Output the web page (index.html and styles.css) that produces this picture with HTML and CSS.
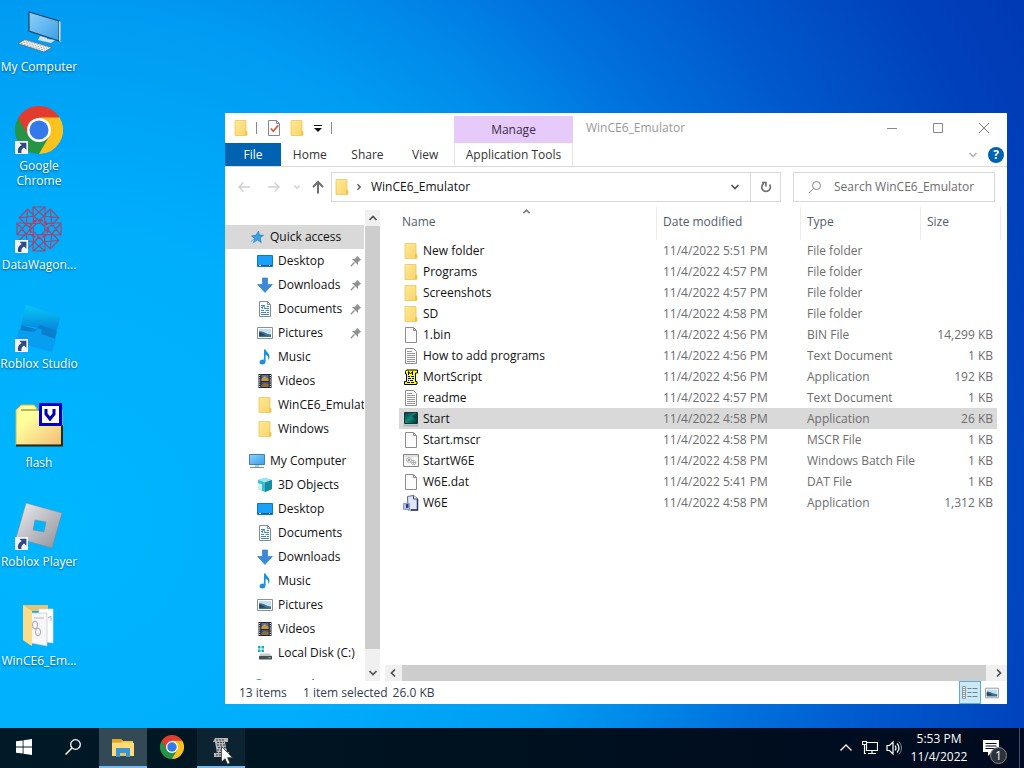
FILE: index.html
```html
<!DOCTYPE html>
<html lang="en">
<head>
<meta charset="utf-8">
<title>WinCE6_Emulator</title>
<link rel="stylesheet" href="styles.css">
</head>
<body>
<svg class="sprite" aria-hidden="true">
  <defs>
    <linearGradient id="g-folder" x1="0" y1="0" x2="1" y2="1"><stop offset="0" stop-color="#ffe996"/><stop offset="1" stop-color="#f8d468"/></linearGradient>
    <linearGradient id="g-screen" x1="0" y1="0" x2="1" y2="1"><stop offset="0" stop-color="#8fd0f8"/><stop offset="1" stop-color="#3a9fe8"/></linearGradient>
    <linearGradient id="g-studio" x1="0" y1="0" x2="0" y2="1"><stop offset="0" stop-color="#08c8f6"/><stop offset="1" stop-color="#0684dc"/></linearGradient>
    <linearGradient id="g-player" x1="0" y1="0" x2="1" y2="1"><stop offset="0" stop-color="#eceef0"/><stop offset="1" stop-color="#8d9099"/></linearGradient>
    <linearGradient id="g-flash" x1="0" y1="0" x2="1" y2="1"><stop offset=".3" stop-color="#ffff9c"/><stop offset="1" stop-color="#f2bc78"/></linearGradient>
    <linearGradient id="g-start" x1="0" y1="0" x2="1" y2="1"><stop offset="0" stop-color="#063a44"/><stop offset=".5" stop-color="#0b8a78"/><stop offset="1" stop-color="#042830"/></linearGradient>
  </defs>
  <symbol id="folder" viewBox="0 0 16 16"><path d="M2 .5h11v10.500l1 .5v3.500l-1 .5H2z" fill="url(#g-folder)" stroke="#ecc75e" stroke-width=".8"/><path d="M12 11v4.500h1.200l.8-.6v-3.500l-1-.6z" fill="#f3c44a"/></symbol>
  <symbol id="page" viewBox="0 0 16 16"><path d="M2.500.5h8l3 3v12h-11z" fill="#fcfcfc" stroke="#8c8c8c"/><path d="M10.500.5v3h3" fill="none" stroke="#8c8c8c"/></symbol>
  <symbol id="text" viewBox="0 0 16 16"><path d="M2.500.5h8l3 3v12h-11z" fill="#fcfcfc" stroke="#8c8c8c"/><path d="M4 3.500h5M4 5.500h8M4 7.500h8M4 9.500h8M4 11.500h8M4 13.500h8" stroke="#999"/></symbol>
  <symbol id="desktop" viewBox="0 0 16 16"><path d="M.5 2.500h15v11H.5z" fill="#18a0fb" stroke="#0b78c9"/><path d="M1 12.500h14" stroke="#0c5a98"/><path d="M2 12.500h2M12 12.500h1" stroke="#fff"/></symbol>
  <symbol id="down" viewBox="0 0 16 16"><path d="M5.500 1h5v6.500h4.800L8 15.500.7 7.500h4.800z" fill="#3b8ad8" stroke="#2a74c0" stroke-width=".6"/></symbol>
  <symbol id="docs" viewBox="0 0 16 16"><path d="M2.500.5h8l3 3v12h-11z" fill="#fff" stroke="#7c8b96"/><path d="M10.500.5v3h3" fill="none" stroke="#7c8b96"/><path d="M4 4.500h4M9.500 5.500H12M4 6.500h2M7.500 7.500H12M4 9.500h3M8.500 9.500H12M4 11.500h5M10 11.500h2M4 13.500h8" stroke="#3f89b8"/><path d="M5 8l1.500-4L8 8" stroke="#3f89b8" fill="none"/></symbol>
  <symbol id="pics" viewBox="0 0 16 16"><path d="M.5 2.500h15v11H.5z" fill="#fff" stroke="#8a9196"/><path d="M2 4h12v8H2z" fill="#bfe0f6"/><path d="M2 6.500c4-1 7 3 12 3V12H2z" fill="#3f7188"/><path d="M2 7.500c3 0 4 2 7 3l-7 .5z" fill="#27465a"/></symbol>
  <symbol id="music" viewBox="0 0 16 16"><path d="M7 .5h1.600c.4 2.600 4.400 3.600 3.900 8-.2 1.200-.8 2-1.400 2.500.7-3-.4-4.400-2.500-5.200v6.700c0 1.900-1.500 3-3.200 3S2.500 14.500 2.500 13.200c0-1.600 2.200-3 4.500-2.500z" fill="#1593dc"/></symbol>
  <symbol id="video" viewBox="0 0 16 16"><path d="M1.500 1h13v14h-13z" fill="#26272b"/><path d="M2.700 2v12.500M13.300 2v12.500" stroke="#e6e6e6" stroke-width="1.200" stroke-dasharray="1 1.200"/><path d="M4.500 2h7v6h-7z" fill="#5b6bb0"/><path d="M4.500 6l3-3 4 3v2h-7z" fill="#c79a35"/><path d="M4.500 9h7v5h-7z" fill="#455292"/><path d="M4.500 12l3-2 4 1v3h-7z" fill="#8d6d35"/></symbol>
  <symbol id="star" viewBox="0 0 16 16"><path d="M9.500 2l.9 4 4.100.3-3.300 2.600 1 4.600-3.700-2.500-4 2.500 1.200-4-3.200-2.600 4.400-.6z" fill="#3aa0e4" stroke="#1e7fc4" stroke-width=".7"/><path d="M2 12.500l3-2.500M3.500 14.500L6 11.500" stroke="#5ab4ee"/></symbol>
  <symbol id="pc" viewBox="0 0 16 16"><path d="M.5 1.500h15v10H.5z" fill="url(#g-screen)" stroke="#3985b8"/><path d="M6 12h4v2H6z" fill="#b8c8d2"/><path d="M1 14.500h14" stroke="#6595b4"/></symbol>
  <symbol id="cube" viewBox="0 0 16 16"><path d="M8 1l7 2v9l-7 3-7-3V3z" fill="#36bccb"/><path d="M8 1l7 2-7 2.500L1 3z" fill="#9ae8ee"/><path d="M8 5.500L15 3v9l-7 3z" fill="#138ca2"/><path d="M1 6l4 1.300V13.500L1 12z" fill="#c7f3f5"/></symbol>
  <symbol id="disk" viewBox="0 0 16 16"><path d="M1 1h2.500v2.500H1zM4.500 1H7v2.500H4.500zM1 4.500h2.500V7H1zM4.500 4.500H7V7H4.500z" fill="#1aaeb8"/><path d="M3.500 8.500h9l2.500 2.500H2z" fill="#c5c9cc"/><path d="M2 11h13v3.500H2z" fill="#4b5054"/><path d="M11.500 12.700h2" stroke="#67e07a"/></symbol>
  <symbol id="net" viewBox="0 0 16 16"><circle cx="10" cy="7" r="5" fill="#4b9a94"/><path d="M2 7h7v6H2z" fill="#4ba8e4"/></symbol>
  <symbol id="pin" viewBox="0 0 12 12"><path d="M7 .8L11.200 5l-1.300.4-1.700 1.700-.3 2.900L2 4.100l2.900-.3 1.700-1.700z" fill="#8d9296"/><path d="M4.500 7.500L.8 11.200" stroke="#8d9296" stroke-width="1.400"/></symbol>
  <symbol id="mort" viewBox="0 0 16 16"><path d="M2.500 2.500l1-1.500h11v3h-2v8.500H14v2.500l-1 .5H1.500v-3h2V5h-1z" fill="#ff0" stroke="#000"/><path d="M5.500 6V2.500L7.500 5l2-2.500V6" fill="none" stroke="#000"/><path d="M5 7.500h2m1 0h3M5 9.500h3m1 0h2M5 11.500h1m1 0h3M4 13.500h3m1 0h3" stroke="#000"/></symbol>
  <symbol id="startexe" viewBox="0 0 16 16"><path d="M1.500 1.500h13v11h-13z" fill="url(#g-start)" stroke="#203236"/><path d="M9 5l5-3v9z" fill="#04454b"/><path d="M.5 14.500h15" stroke="#aeb4b4" stroke-width="2"/></symbol>
  <symbol id="batch" viewBox="0 0 16 16"><path d="M.5 1.500h15v12H.5z" fill="#f8f8f8" stroke="#858585"/><path d="M1 3h14" stroke="#c8c8c8"/><g fill="none" stroke="#858585"><circle cx="6" cy="7" r="2.400" stroke-dasharray="1 .5"/><circle cx="6" cy="7" r=".8"/><circle cx="10.500" cy="9.500" r="2.200" stroke-dasharray="1 .5"/><circle cx="10.500" cy="9.500" r=".7"/></g></symbol>
  <symbol id="w6e" viewBox="0 0 16 16"><path d="M4.500 1.500l6-1 4 3v11.500H5z" fill="#dfe6fa" stroke="#5f6685"/><path d="M10.500.5v3.500h4" fill="#fff" stroke="#394474"/><path d="M14.500 4v11H8" fill="none" stroke="#28346e" stroke-width="1.500"/><path d="M.5 8.500h6v6h-6z" fill="#b4c1e8" stroke="#8c9ac4"/><path d="M3 9h2.500v4H3z" fill="#243a8e"/></symbol>
  <symbol id="props" viewBox="0 0 16 16"><path d="M2.500.5h8l3 3v12h-11z" fill="#fff" stroke="#8088a0"/><path d="M10.500.5v3h3" fill="none" stroke="#8088a0"/><path d="M4.800 8.500l2.500 2.800 5-6" fill="none" stroke="#dc5132" stroke-width="1.700"/></symbol>
  <symbol id="details" viewBox="0 0 16 16"><path d="M.5 1.500h3v12h-3zM.5 5.500h3M.5 9.500h3" fill="#fff" stroke="#8899a5"/><path d="M1.500 3.500h1M1.500 7.500h1M1.500 11.500h1" stroke="#333"/><path d="M5.500 3.500h4m1 0h5M5.500 7.500h4m1 0h5M5.500 11.500h4m1 0h5" stroke="#6f828e"/></symbol>
  <symbol id="up" viewBox="0 0 10 10"><path d="M1.500 7L5 3.500 8.500 7" fill="none" stroke="currentColor" stroke-width="1.700"/></symbol>
  <symbol id="chev" viewBox="0 0 10 10"><path d="M1.500 3L5 6.500 8.500 3" fill="none" stroke="currentColor" stroke-width="1.700"/></symbol>
  <symbol id="left" viewBox="0 0 10 10"><path d="M7 1.500L3.500 5 7 8.500" fill="none" stroke="currentColor" stroke-width="1.700"/></symbol>
  <symbol id="right" viewBox="0 0 10 10"><path d="M3 1.500L6.500 5 3 8.500" fill="none" stroke="currentColor" stroke-width="1.700"/></symbol>
  <symbol id="chrome" viewBox="0 0 48 48"><path d="M24 24L3.200 12A24 24 0 0 1 44.800 12z" fill="#e33b2e"/><path d="M24 24L44.800 12A24 24 0 0 1 24 48z" fill="#fcc31e"/><path d="M24 12h20.800" stroke="#fcc31e" stroke-width="1"/><path d="M3.200 12A24 24 0 0 0 24 48l10.400-18L24 24z" fill="#259447"/><path d="M24 12h20.800l-10.400 18z" fill="#fcc31e"/><path d="M3.200 12l10.400 18L24 12z" fill="#e33b2e"/><circle cx="24" cy="24" r="12" fill="#fff"/><circle cx="24" cy="24" r="9.500" fill="#3479ea"/></symbol>
  <symbol id="link" viewBox="0 0 12 12"><path d="M0 0h12v12H0z" fill="#f4f5f8"/><path d="M4 1.500h6.500V8L8.300 5.900C6 7.500 5.600 9 6 11H3C2 8 3.200 5.500 6.200 3.800z" fill="#2e4a86"/></symbol>
  <symbol id="mycomputer" viewBox="0 0 48 48"><path d="M14 5l30 9v20l-30-10z" fill="url(#g-screen)" stroke="#24445e" stroke-width="1.200"/><path d="M44 14l1.500 1v20l-1.500-1z" fill="#ddd"/><path d="M25 29l7 2v1l8 1-4 3-13-3 1-2z" fill="#dadfe3"/><path d="M3 36.500l7-4 27 8-8 4.500z" fill="#f1f1f1" stroke="#596a74" stroke-width=".8"/><path d="M6 36.500l24 7M8 35l24 7M10 33.500l24 7" stroke="#a8b2b8" stroke-dasharray="2 1"/></symbol>
  <symbol id="wagon" viewBox="0 0 48 48"><g fill="none" stroke="#9c4878" stroke-width="1.200"><g id="cell"><path d="M18 2h12v8l-6 6-6-6zM18 2l12 10M30 2L18 12M24 16l5 5"/></g><use href="#cell" transform="rotate(45 24 24)"/><use href="#cell" transform="rotate(90 24 24)"/><use href="#cell" transform="rotate(135 24 24)"/><use href="#cell" transform="rotate(180 24 24)"/><use href="#cell" transform="rotate(225 24 24)"/><use href="#cell" transform="rotate(270 24 24)"/><use href="#cell" transform="rotate(315 24 24)"/><circle cx="24" cy="24" r="9" stroke="#c03a60" stroke-dasharray="4 2" stroke-width="2"/></g></symbol>
  <symbol id="studio" viewBox="0 0 48 48"><path d="M11 1l35 11-4.500 15L6 21z" fill="url(#g-studio)"/><path d="M6 21l15 4 4-4 17 6-2 8-35-8z" fill="#087fcd"/><path d="M4 26l15 2 4-4 4 2-1 4 15 5-4 13L0 38z" fill="#079df0"/></symbol>
  <symbol id="player" viewBox="0 0 48 48"><path d="M11 1l36 10-10 35L1 36zM20 18l-2 10 11 2 2-10z" fill="url(#g-player)" fill-rule="evenodd" stroke="#7d858e" stroke-width=".5"/></symbol>
  <symbol id="flashfolder" viewBox="0 0 48 48"><path d="M1 7l5-5h13l4 5h24v35H1z" fill="url(#g-flash)" stroke="#d5b552"/><path d="M1 42.500h46V22" fill="none" stroke="#272916" stroke-width="2"/><path d="M6 7h18" stroke="#6f6a30"/><path d="M25.500 1.500h20v20h-20z" fill="#fff" stroke="#0000c8" stroke-width="3"/><path d="M31 6v5l4 5 4-5V6" fill="none" stroke="#0000b4" stroke-width="3"/></symbol>
  <symbol id="openfolder" viewBox="0 0 48 48"><path d="M8 4h25v6H15v34L8 39z" fill="#e5c36f"/><path d="M24 8h14v34l-14-2z" fill="#fff" stroke="#d9d9d9" stroke-width=".7"/><path d="M16 12h16v33l-16-3z" fill="#f7f7f9" stroke="#c5c5c8" stroke-width=".7"/><path d="M19 17h10M33 17l3-2v5" fill="none" stroke="#bbb4c2"/><ellipse cx="20" cy="24" rx="2.500" ry="4" fill="none" stroke="#aaa0b2"/><ellipse cx="23" cy="31" rx="2.500" ry="4" fill="none" stroke="#aaa0b2"/><path d="M8 4l9 6v35l-9-6z" fill="#fbdc8d"/></symbol>
</svg>

<main class="desktop">
  <nav class="shortcuts" aria-label="Desktop">
    <button class="shortcut"><svg class="art"><use href="#mycomputer"/></svg><span>My Computer</span></button>
    <button class="shortcut"><svg class="art"><use href="#chrome"/><use href="#link" y="35" width="13" height="13"/></svg><span>Google Chrome</span></button>
    <button class="shortcut"><svg class="art"><use href="#wagon"/><use href="#link" y="35" width="13" height="13"/></svg><span>DataWagon...</span></button>
    <button class="shortcut"><svg class="art"><use href="#studio"/><use href="#link" y="35" width="13" height="13"/></svg><span>Roblox Studio</span></button>
    <button class="shortcut"><svg class="art"><use href="#flashfolder"/></svg><span>flash</span></button>
    <button class="shortcut"><svg class="art"><use href="#player"/><use href="#link" y="35" width="13" height="13"/></svg><span>Roblox Player</span></button>
    <button class="shortcut"><svg class="art"><use href="#openfolder"/></svg><span>WinCE6_Em...</span></button>
  </nav>

  <section class="window" aria-label="WinCE6_Emulator">
    <header class="titlebar">
      <div class="quick">
        <svg class="ico"><use href="#folder"/></svg><i class="bar"></i>
        <button aria-label="Properties"><svg class="ico"><use href="#props"/></svg></button>
        <button aria-label="New folder"><svg class="ico"><use href="#folder"/></svg></button>
        <button class="custom" aria-label="Customize toolbar"><svg class="tiny" viewBox="0 0 10 10"><path d="M1 2.500h8" stroke="#111"/><path d="M1 5h8L5 9z" fill="#111"/></svg></button><i class="bar"></i>
      </div>
      <div class="manage">Manage</div>
      <h1 class="title">WinCE6_Emulator</h1>
      <div class="controls">
        <button aria-label="Minimize"><svg class="tiny" viewBox="0 0 10 10"><path d="M0 5.500h10" stroke="#888"/></svg></button>
        <button aria-label="Maximize"><svg class="tiny" viewBox="0 0 10 10"><path d="M.5.5h9v9h-9z" fill="none" stroke="#888"/></svg></button>
        <button aria-label="Close"><svg class="tiny" viewBox="0 0 10 10"><path d="M0 0l10 10M10 0L0 10" stroke="#777"/></svg></button>
      </div>
    </header>
    <div class="tabs">
      <div class="tabset">
        <button class="tab file">File</button><button class="tab">Home</button><button class="tab">Share</button><button class="tab">View</button>
      </div>
      <button class="tab tools">Application Tools</button>
      <div class="help">
        <button aria-label="Expand ribbon"><svg class="tiny pale"><use href="#chev"/></svg></button>
        <button class="ask" aria-label="Help">?</button>
      </div>
    </div>

    <div class="locate">
      <div class="nav">
        <button class="back" aria-label="Back" disabled><svg class="arrow" viewBox="0 0 14 14"><path d="M13 7H2M6.500 2.500L2 7l4.500 4.500" fill="none" stroke="#d0d0d0" stroke-width="1.400"/></svg></button>
        <button class="forward" aria-label="Forward" disabled><svg class="arrow" viewBox="0 0 14 14"><path d="M1 7h11M7.500 2.500L12 7l-4.500 4.500" fill="none" stroke="#d0d0d0" stroke-width="1.400"/></svg></button>
        <button aria-label="Recent" disabled><svg class="mini faint"><use href="#chev"/></svg></button>
        <button aria-label="Up"><svg class="arrow" viewBox="0 0 14 14"><path d="M7 13.500V2M2 7l5-5 5 5" fill="none" stroke="#6e6e6e" stroke-width="2"/></svg></button>
      </div>
      <div class="address">
        <svg class="ico"><use href="#folder"/></svg>
        <svg class="mini crumb"><use href="#right"/></svg>
        <button class="place">WinCE6_Emulator</button>
        <button class="drop" aria-label="Previous locations"><svg class="small"><use href="#chev"/></svg></button>
        <button class="refresh" aria-label="Refresh"><svg class="arrow" viewBox="0 0 14 14"><path d="M10.500 4.500A4.300 4.300 0 1 1 5 3.300" fill="none" stroke="#6c6c6c" stroke-width="1.600"/><path d="M3 2.500h4v4" fill="none" stroke="#6c6c6c" stroke-width="1.600"/></svg></button>
      </div>
      <label class="search">
        <svg class="arrow" viewBox="0 0 14 14"><circle cx="8.500" cy="5.500" r="4" fill="none" stroke="#888"/><path d="M5.700 8.300L1 13" stroke="#888"/></svg>
        <input type="search" aria-label="Search" placeholder="Search WinCE6_Emulator">
      </label>
    </div>

    <div class="body">
      <nav class="tree" aria-label="Folders">
        <a class="node root current" href="#"><svg class="ico"><use href="#star"/></svg><span>Quick access</span></a>
        <a class="node" href="#"><svg class="ico"><use href="#desktop"/></svg><span>Desktop</span><svg class="pin"><use href="#pin"/></svg></a>
        <a class="node" href="#"><svg class="ico"><use href="#down"/></svg><span>Downloads</span><svg class="pin"><use href="#pin"/></svg></a>
        <a class="node" href="#"><svg class="ico"><use href="#docs"/></svg><span>Documents</span><svg class="pin"><use href="#pin"/></svg></a>
        <a class="node" href="#"><svg class="ico"><use href="#pics"/></svg><span>Pictures</span><svg class="pin"><use href="#pin"/></svg></a>
        <a class="node" href="#"><svg class="ico"><use href="#music"/></svg><span>Music</span></a>
        <a class="node" href="#"><svg class="ico"><use href="#video"/></svg><span>Videos</span></a>
        <a class="node" href="#"><svg class="ico"><use href="#folder"/></svg><span>WinCE6_Emulator</span></a>
        <a class="node" href="#"><svg class="ico"><use href="#folder"/></svg><span>Windows</span></a>
        <a class="node root" href="#"><svg class="ico"><use href="#pc"/></svg><span>My Computer</span></a>
        <a class="node" href="#"><svg class="ico"><use href="#cube"/></svg><span>3D Objects</span></a>
        <a class="node" href="#"><svg class="ico"><use href="#desktop"/></svg><span>Desktop</span></a>
        <a class="node" href="#"><svg class="ico"><use href="#docs"/></svg><span>Documents</span></a>
        <a class="node" href="#"><svg class="ico"><use href="#down"/></svg><span>Downloads</span></a>
        <a class="node" href="#"><svg class="ico"><use href="#music"/></svg><span>Music</span></a>
        <a class="node" href="#"><svg class="ico"><use href="#pics"/></svg><span>Pictures</span></a>
        <a class="node" href="#"><svg class="ico"><use href="#video"/></svg><span>Videos</span></a>
        <a class="node" href="#"><svg class="ico"><use href="#disk"/></svg><span>Local Disk (C:)</span></a>
        <a class="node root" href="#"><svg class="ico"><use href="#net"/></svg><span>Network</span></a>
      </nav>
      <div class="vscroll">
        <button aria-label="Scroll up"><svg class="small"><use href="#up"/></svg></button>
        <div class="thumb"></div>
        <button aria-label="Scroll down"><svg class="small"><use href="#chev"/></svg></button>
      </div>
      <div class="pane">
        <div class="files">
          <table>
            <colgroup><col><col class="c-date"><col class="c-type"><col class="c-size"></colgroup>
            <thead><tr><th>Name<svg class="sort"><use href="#up"/></svg></th><th>Date modified</th><th>Type</th><th>Size</th></tr></thead>
            <tbody>
              <tr><td><div class="name"><svg class="ico"><use href="#folder"/></svg>New folder</div></td><td>11/4/2022 5:51 PM</td><td>File folder</td><td></td></tr>
              <tr><td><div class="name"><svg class="ico"><use href="#folder"/></svg>Programs</div></td><td>11/4/2022 4:57 PM</td><td>File folder</td><td></td></tr>
              <tr><td><div class="name"><svg class="ico"><use href="#folder"/></svg>Screenshots</div></td><td>11/4/2022 4:57 PM</td><td>File folder</td><td></td></tr>
              <tr><td><div class="name"><svg class="ico"><use href="#folder"/></svg>SD</div></td><td>11/4/2022 4:58 PM</td><td>File folder</td><td></td></tr>
              <tr><td><div class="name"><svg class="ico"><use href="#page"/></svg>1.bin</div></td><td>11/4/2022 4:56 PM</td><td>BIN File</td><td>14,299 KB</td></tr>
              <tr><td><div class="name"><svg class="ico"><use href="#text"/></svg>How to add programs</div></td><td>11/4/2022 4:56 PM</td><td>Text Document</td><td>1 KB</td></tr>
              <tr><td><div class="name"><svg class="ico"><use href="#mort"/></svg>MortScript</div></td><td>11/4/2022 4:56 PM</td><td>Application</td><td>192 KB</td></tr>
              <tr><td><div class="name"><svg class="ico"><use href="#text"/></svg>readme</div></td><td>11/4/2022 4:57 PM</td><td>Text Document</td><td>1 KB</td></tr>
              <tr class="picked"><td><div class="name"><svg class="ico"><use href="#startexe"/></svg>Start</div></td><td>11/4/2022 4:58 PM</td><td>Application</td><td>26 KB</td></tr>
              <tr><td><div class="name"><svg class="ico"><use href="#page"/></svg>Start.mscr</div></td><td>11/4/2022 4:58 PM</td><td>MSCR File</td><td>1 KB</td></tr>
              <tr><td><div class="name"><svg class="ico"><use href="#batch"/></svg>StartW6E</div></td><td>11/4/2022 4:58 PM</td><td>Windows Batch File</td><td>1 KB</td></tr>
              <tr><td><div class="name"><svg class="ico"><use href="#page"/></svg>W6E.dat</div></td><td>11/4/2022 5:41 PM</td><td>DAT File</td><td>1 KB</td></tr>
              <tr><td><div class="name"><svg class="ico"><use href="#w6e"/></svg>W6E</div></td><td>11/4/2022 4:58 PM</td><td>Application</td><td>1,312 KB</td></tr>
            </tbody>
          </table>
        </div>
        <div class="hscroll">
          <button aria-label="Scroll left"><svg class="small"><use href="#left"/></svg></button>
          <div class="thumb"></div>
          <button aria-label="Scroll right"><svg class="small"><use href="#right"/></svg></button>
        </div>
      </div>
    </div>

    <footer class="status">
      <span class="count">13 items</span><span class="sel">1 item selected</span><span>26.0 KB</span>
      <div class="views">
        <button class="on" aria-label="Details view"><svg class="ico"><use href="#details"/></svg></button>
        <button aria-label="Large icons view"><svg class="thumbs"><use href="#pics"/></svg></button>
      </div>
    </footer>
  </section>
</main>

<footer class="taskbar">
  <div class="apps">
    <button aria-label="Start"><svg class="ico" viewBox="0 0 16 16"><path d="M0 2.300L6.700 1.400v6.200H0zM7.500 1.200L16 0v7.600H7.500zM0 8.400h6.700v6.200L0 13.700zM7.500 8.400H16V16l-8.500-1.200z" fill="#fff"/></svg></button>
    <button aria-label="Search"><svg class="ico" viewBox="0 0 16 16"><circle cx="10.500" cy="5.500" r="4.800" fill="none" stroke="#fff" stroke-width="1.300"/><path d="M7 9L.5 15.500" stroke="#fff" stroke-width="1.500"/></svg></button>
    <button class="active" aria-label="File Explorer"><svg class="app" viewBox="0 0 24 24"><path d="M1 4h9l2 2h10v15H1z" fill="#f8ce52"/><path d="M1 4h9l1.500 2L10 7.500H1z" fill="#dba52e"/><path d="M1 8h22v13H1z" fill="#ffdc78"/><path d="M5 13h14v9h-4v-4H9v4H5z" fill="#3b94d4"/><path d="M9 18h6v3H9z" fill="#e6c266"/></svg></button>
    <button aria-label="Google Chrome"><svg class="app"><use href="#chrome"/></svg></button>
    <button class="running" aria-label="MortScript"><svg class="app" viewBox="0 0 24 24"><path d="M6 3h13v4h-3l2 10h2v5H5v-4h3L6 7H4z" fill="#b6b8ba"/><path d="M7 5h9M8 7.500h7M8 10h8M9 12.500h8M8 15h9M7 17.500h11M7 20h10" stroke="#353b40" stroke-dasharray="2 1"/></svg></button>
  </div>
  <div class="tray">
    <button aria-label="Hidden icons"><svg class="arrow" viewBox="0 0 14 14"><path d="M1.500 9.500L7 4l5.500 5.500" fill="none" stroke="#fff" stroke-width="1.400"/></svg></button>
    <button aria-label="Network"><svg class="ico" viewBox="0 0 16 16"><path d="M4.500 2.500h11v8h-11zM10 10.500v3M6 13.500h8M.5 1.500h4v3h-4zM2.500 5v8.500H4" fill="none" stroke="#fff" stroke-width="1.200"/></svg></button>
    <button aria-label="Volume"><svg class="ico" viewBox="0 0 16 16"><path d="M1 5.500h2.500L7 2v12l-3.500-3.500H1zM9 5.500q2 2.500 0 5M11 3.500q4 4.500 0 9" fill="none" stroke="#fff" stroke-width="1.200"/><path d="M13 1.500q5 6.500 0 13" fill="none" stroke="#888"/></svg></button>
    <button class="clock"><time>5:53 PM</time><time>11/4/2022</time></button>
    <button class="notes" aria-label="Notifications"><svg class="note" viewBox="0 0 18 18"><path d="M1 1h16v12h-7l-4 4v-4H1z" fill="#fff"/><path d="M3.500 4.500h11M3.500 7h11M3.500 9.500h11" stroke="#050c20"/></svg><span class="badge">1</span></button>
    <button class="peek" aria-label="Show desktop"></button>
  </div>
</footer>
<svg class="cursor" viewBox="0 0 12 19" aria-hidden="true"><path d="M.5.5v15.500l3.500-3.300 2.500 5.500 2.500-1-2.400-5.500h5z" fill="#fff" stroke="#222" stroke-width=".7"/></svg>
</body>
</html>
```
FILE: styles.css
```css
* { box-sizing: border-box; }
body {
  margin: 0;
  height: 100vh;
  display: flex;
  flex-direction: column;
  overflow: hidden;
  font: 12px/16px "Open Sans", "Noto Sans", sans-serif;
  color: #111;
  background: radial-gradient(circle farthest-corner at 6% 68%, #00b6ff 0, #00aefc 27%, #009df3 46%, #0088e8 56%, #0072de 64%, #0057cb 77%, #0042bc 90%, #003ab4 100%);
}
button {
  margin: 0;
  padding: 0;
  border: 0;
  background: none;
  font: inherit;
  color: inherit;
  display: flex;
  align-items: center;
  justify-content: center;
}
a { color: inherit; text-decoration: none; }
svg { display: block; flex: none; }
.sprite { position: absolute; width: 0; height: 0; }
.ico { width: 16px; height: 16px; }
.arrow { width: 14px; height: 14px; }
.small, .tiny { width: 10px; height: 10px; }
.mini { width: 8px; height: 8px; }
.small { color: #505050; }
.pale { color: #b4b4b4; }
.faint { color: #d0d0d0; }

/* Desktop */
.desktop { flex: 1; min-height: 0; position: relative; }
.shortcuts { display: flex; flex-direction: column; width: 78px; }
.shortcut {
  height: 99px;
  padding-top: 7px;
  flex-direction: column;
  justify-content: flex-start;
  gap: 4px;
  color: #fff;
  line-height: 15px;
  text-shadow: 0 1px 2px rgba(0, 0, 0, .5);
}
.art { width: 48px; height: 48px; }

/* Explorer window */
.window {
  position: absolute;
  top: 113px;
  right: 17px;
  bottom: 24px;
  left: 225px;
  display: flex;
  flex-direction: column;
  background: #fff;
}
.titlebar, .tabs { display: grid; grid-template-columns: 229px 119px 1fr auto; flex: none; }
.titlebar { height: 30px; }
.quick { display: flex; align-items: center; gap: 7px; padding-left: 8px; }
.bar { width: 1px; height: 12px; background: #888; }
.bar + button { margin-left: 2px; }
.custom { width: 12px; }
.manage {
  margin-top: 3px;
  display: flex;
  align-items: center;
  justify-content: center;
  background: #e6cbfa;
  color: #3b2c49;
}
.title { margin: 0; padding-left: 13px; font: inherit; line-height: 30px; color: #999; }
.controls { display: flex; }
.controls button { width: 46px; }
.tabs { height: 24px; border-bottom: 1px solid #dadada; }
.tabset { display: grid; grid-template-columns: 56px 1fr 1fr 1fr; }
.tab { color: #333; }
.file { background: #0063b1; color: #fff; }
.tools { border: solid #e4e4e4; border-width: 0 1px; }
.help { grid-column: 4; display: flex; gap: 10px; padding-right: 3px; align-items: center; }
.ask { width: 16px; height: 16px; border-radius: 50%; background: #0063b1; color: #fff; font-weight: 700; }

.locate { flex: none; display: flex; padding: 5px 12px 5px 0; height: 40px; }
.nav { width: 106px; display: flex; align-items: center; gap: 10px; padding-left: 12px; }
.back { margin-right: 6px; }
.forward { margin-right: 2px; }
.address { flex: 1; display: flex; align-items: center; border: 1px solid #d9d9d9; padding-left: 2px; }
.crumb { margin: 0 8px 0 5px; color: #555; }
.drop { margin-left: auto; width: 30px; }
.refresh { width: 30px; align-self: stretch; border-left: 1px solid #d9d9d9; }
.search { width: 202px; margin-left: 12px; display: flex; align-items: center; gap: 12px; padding-left: 14px; border: 1px solid #d9d9d9; }
.search input { flex: 1; min-width: 0; border: 0; padding: 0; background: none; font: inherit; outline: 0; }
.search input::placeholder { color: #6d6d6d; opacity: 1; }

.body { flex: 1; min-height: 0; display: flex; }
.tree { width: 139px; margin-bottom: 1px; padding-top: 18px; overflow: hidden; }
.node { height: 24px; padding-left: 32px; display: flex; align-items: center; gap: 5px; white-space: nowrap; }
.root { padding-left: 24px; margin-top: 8px; }
.current { background: #d9d9d9; margin-top: 0; }
.pin { width: 12px; height: 12px; margin: 0 2px 0 auto; }
.vscroll { width: 16px; margin-top: 3px; display: flex; flex-direction: column; background: #f0f0f0; border-left: 1px solid #fff; }
.vscroll button { height: 16px; }
.vscroll .thumb { flex: 1; margin-bottom: 16px; }
.thumb { background: #cdcdcd; }
.pane { flex: 1; min-width: 0; margin-left: 5px; display: flex; flex-direction: column; }
.files { flex: 1; min-height: 0; overflow: hidden; padding: 0 6px 0 14px; }
.files table { width: 100%; table-layout: fixed; border-spacing: 0; }
.c-date { width: 144px; }
.c-type { width: 120px; }
.c-size { width: 80px; }
.files th { position: relative; height: 33px; padding: 0 6px 3px; font-weight: 400; text-align: left; color: #515c6b; border-right: 1px solid #ececec; }
.files th:first-child { padding-left: 3px; }
.sort { position: absolute; top: 0; left: 48%; width: 9px; height: 9px; color: #777; }
.files td { height: 21px; padding: 0 6px; color: #6d6d6d; white-space: nowrap; }
.files td:first-child { padding-left: 4px; color: #111; }
.files td:last-child { text-align: right; padding-right: 4px; border-right: 4px solid #fff; }
.name { display: flex; align-items: center; gap: 4px; }
.picked td { background: #d9d9d9; }
.hscroll { height: 16px; display: flex; gap: 1px; background: #f0f0f0; }
.hscroll button { width: 16px; }
.hscroll .thumb { flex: 1; margin-right: 4px; }

.status { flex: none; height: 23px; display: flex; align-items: center; padding: 0 4px 0 14px; color: #333c50; }
.count { width: 64px; }
.sel { margin-right: 5px; }
.views { margin-left: auto; display: flex; align-self: stretch; }
.views button { width: 22px; }
.views .on { border: 1px solid #5aaed4; background: #cbe8f6; }
.thumbs { width: 14px; height: 14px; }

/* Taskbar */
.taskbar { flex: none; height: 40px; display: flex; justify-content: space-between; color: #fff; background: linear-gradient(90deg, #001a27, #00121f 40%, #000a20); }
.apps, .tray { display: flex; }
.apps button { width: 48px; border-bottom: 2px solid transparent; margin-right: 1px; }
.apps .active { margin-left: 1px; background: #334955; border-color: #76b9ed; }
.apps .running { background: #0c2431; border-color: #76b9ed; }
.app { width: 24px; height: 24px; }
.tray button { width: 24px; }
.tray .clock { width: 66px; flex-direction: column; line-height: 18px; }
.tray .notes { width: 38px; margin-right: 9px; position: relative; }
.note { width: 18px; height: 18px; }
.badge { position: absolute; left: 18px; top: 19px; width: 17px; height: 17px; border: 1px solid #888; border-radius: 50%; background: #2c323c; line-height: 15px; }
.tray .peek { width: 5px; border-left: 1px solid #48505f; }
.cursor { position: absolute; left: 221px; top: 746px; width: 12px; height: 19px; }
```
